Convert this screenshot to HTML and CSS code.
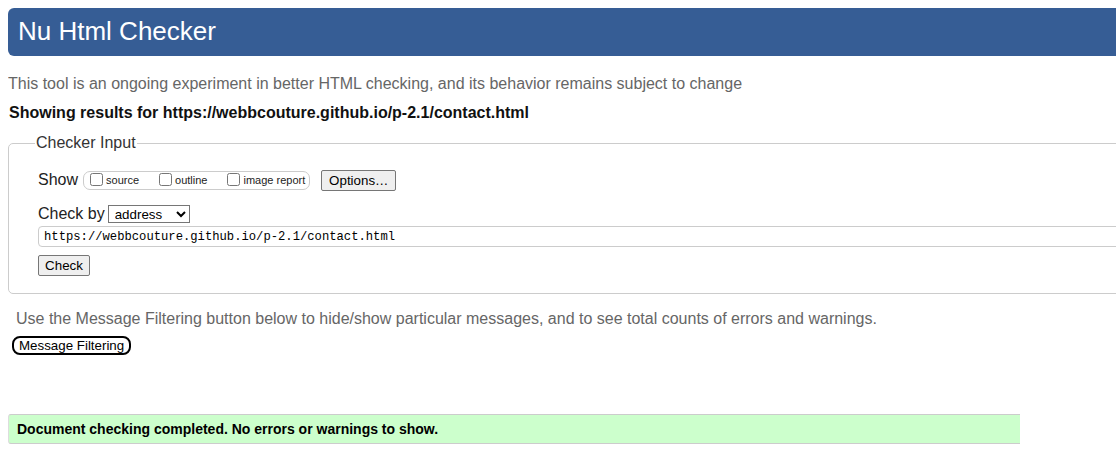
FILE: index.html
```html
<!DOCTYPE html>
<html lang="en">
<head>
<meta charset="utf-8">
<title>Nu Html Checker</title>
<link rel="stylesheet" href="styles.css">
</head>
<body>
<div class="page">
  <h1 class="title">Nu Html Checker</h1>
  <p class="intro">This tool is an ongoing experiment in better HTML checking, and its behavior remains subject to change</p>
  <p class="showing">Showing results for https://webbcouture.github.io/p-2.1/contact.html</p>
  <fieldset class="checker">
    <legend class="legend">Checker Input</legend>
    <div class="row show-row">
      <span class="label">Show</span>
      <span class="group">
        <label class="opt opt-source"><input type="checkbox" class="cb">source</label>
        <label class="opt opt-outline"><input type="checkbox" class="cb">outline</label>
        <label class="opt"><input type="checkbox" class="cb">image report</label>
      </span>
      <button class="btn options">Options…</button>
    </div>
    <div class="row checkby-row">
      <span class="label">Check by</span>
      <select class="select"><option>address</option></select>
    </div>
    <div class="url-row">
      <input class="url" type="text" value="https://webbcouture.github.io/p-2.1/contact.html">
    </div>
    <div class="check-row">
      <button class="btn check">Check</button>
    </div>
  </fieldset>
  <p class="filter-note">Use the Message Filtering button below to hide/show particular messages, and to see total counts of errors and warnings.</p>
  <button class="filter-btn">Message Filtering</button>
  <div class="success">Document checking completed. No errors or warnings to show.</div>
</div>
</body>
</html>
```
FILE: styles.css
```css
html, body {
  overflow: hidden;
}
body {
  margin: 8px 0 0 8px;
  font-family: "Liberation Sans", Arial, sans-serif;
  background: #fff;
  color: #111;
}
.page {
  width: 1200px;
}
.title {
  margin: 0;
  height: 48px;
  line-height: 47px;
  padding-left: 10px;
  background: #365d95;
  color: #fff;
  font-size: 26px;
  font-weight: normal;
  border-radius: 6px 0 0 6px;
}
.intro {
  margin: 19px 0 0 0;
  font-size: 16px;
  line-height: 18px;
  color: #666;
}
.showing {
  margin: 11px 0 0 1px;
  font-size: 16px;
  line-height: 18px;
  font-weight: bold;
  color: #111;
}
.checker {
  margin: 12px 0 0 0;
  padding: 0 0 17px 29px;
  border: 1px solid #ccc;
  border-radius: 5px;
}
.legend {
  margin-left: -3px;
  padding: 0 1px;
  font-size: 16px;
  line-height: 18px;
  color: #333;
}
.row {
  display: flex;
  align-items: center;
}
.label {
  font-size: 16px;
  color: #222;
}
.show-row {
  margin-top: 17px;
  height: 22px;
}
.group {
  display: inline-flex;
  align-items: center;
  height: 19px;
  margin-left: 5px;
  padding: 0 4px 0 6px;
  border: 1px solid #ccc;
  border-radius: 7px;
  box-sizing: border-box;
}
.opt {
  display: inline-flex;
  align-items: center;
  font-size: 11px;
  color: #222;
}
.opt-source, .opt-outline {
  margin-right: 20px;
}
.cb {
  width: 13px;
  height: 13px;
  margin: 0 3px 1px 0;
}
.btn {
  font-family: "Liberation Sans", Arial, sans-serif;
  font-size: 13.33px;
  color: #000;
  background: #efefef;
  border: 1px solid #767676;
  border-radius: 2px;
  padding: 0 6px;
  box-sizing: border-box;
}
.options {
  margin-left: 11px;
  height: 21px;
  width: 75px;
}
.checkby-row {
  margin-top: 13px;
  height: 20px;
}
.select {
  margin-left: 3px;
  width: 82px;
  height: 18px;
  font-family: "Liberation Sans", Arial, sans-serif;
  font-size: 13.33px;
  padding: 0 0 0 2px;
  border: 1px solid #767676;
  border-radius: 0;
  background: #fff;
  color: #000;
}
.url-row {
  margin-top: 2px;
}
.url {
  display: block;
  width: 1140px;
  height: 21px;
  box-sizing: border-box;
  border: 1px solid #ccc;
  border-radius: 4px;
  padding: 0 5px;
  font-family: "Liberation Mono", "DejaVu Sans Mono", monospace;
  font-size: 12.2px;
  color: #000;
}
.check-row {
  margin-top: 8px;
}
.check {
  display: block;
  height: 21px;
  width: 52px;
}
.filter-note {
  margin: 16px 0 0 8px;
  font-size: 16px;
  line-height: 18px;
  color: #666;
}
.filter-btn {
  display: block;
  margin: 8px 0 0 4px;
  height: 19px;
  padding: 0 5px;
  box-sizing: border-box;
  font-family: "Liberation Sans", Arial, sans-serif;
  font-size: 13.33px;
  line-height: 14px;
  color: #000;
  background: #fff;
  border: 2px solid #000;
  border-radius: 8px;
}
.success {
  margin-top: 59px;
  width: 1012px;
  height: 30px;
  box-sizing: border-box;
  padding-left: 8px;
  line-height: 28px;
  font-size: 14px;
  font-weight: bold;
  color: #000;
  background: #ccffcc;
  border-top: 1px solid #ccc;
  border-bottom: 1px solid #ccc;
  border-left: 1px solid #ddd;
  border-radius: 3px 0 0 3px;
}
```
